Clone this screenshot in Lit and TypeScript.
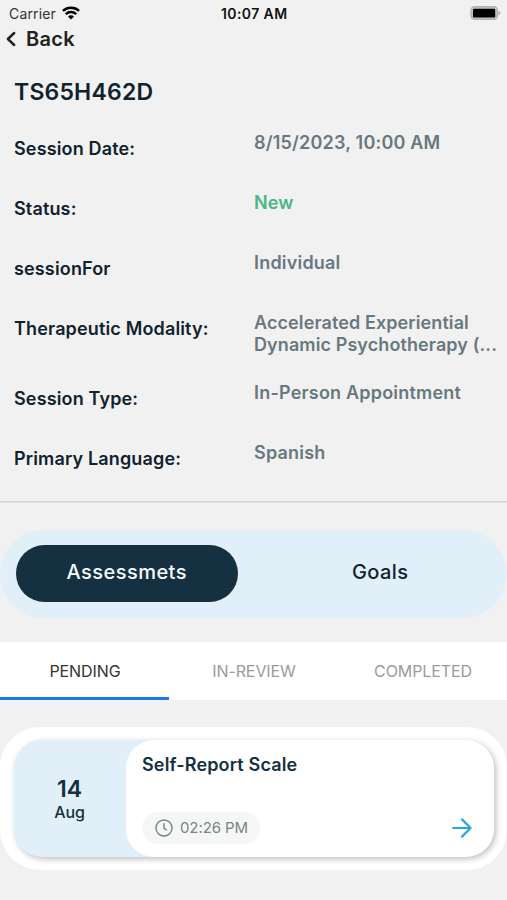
import { LitElement, html, css, svg } from "lit";
import { customElement, state } from "lit/decorators.js";
import { classMap } from "lit/directives/class-map.js";

interface Detail {
  label: string;
  value: string;
  kind?: string;
}

const DETAILS: Detail[] = [
  { label: "Session Date:", value: "8/15/2023, 10:00 AM" },
  { label: "Status:", value: "New", kind: "new" },
  { label: "sessionFor", value: "Individual" },
  { label: "Therapeutic Modality:", value: "Accelerated Experiential Dynamic Psychotherapy (...", kind: "tall" },
  { label: "Session Type:", value: "In-Person Appointment" },
  { label: "Primary Language:", value: "Spanish" },
];

const wifi = svg`<svg class="wifi" width="18" height="14" viewBox="0 0 18 14" fill="none" stroke="#000" stroke-width="2.5">
  <path d="M0.9 4.9C5.4 0.7 12.6 0.7 17.1 4.9"/>
  <path d="M3.8 8.2C6.8 5.4 11.2 5.4 14.2 8.2"/>
  <path d="M9 13.6L5.9 10.5C7.7 8.9 10.3 8.9 12.1 10.5Z" fill="#000" stroke="none"/>
</svg>`;

const battery = svg`<svg class="battery" width="31" height="14" viewBox="0 0 31 14">
  <rect x="1" y="0.8" width="26.4" height="12.6" rx="3.6" fill="#c4c4c4" stroke="#b2b2b2" stroke-width="1.4"/>
  <rect x="3" y="2.8" width="22.2" height="8.8" rx="1.2" fill="#000"/>
  <path d="M28.4 4.8C31 5.6 31 8.6 28.4 9.4Z" fill="#b2b2b2"/>
</svg>`;

@customElement("app-root")
export class AppRoot extends LitElement {
  @state() private section = "Assessmets";
  @state() private tab = "PENDING";

  static styles = css`
    :host {
      display: block;
      height: 900px;
      overflow: hidden;
      background: #f1f1f1;
      color: #10222e;
      font-family: Inter, "Liberation Sans", sans-serif;
      white-space: nowrap;
    }
    * { box-sizing: border-box; }
    svg { display: block; flex: none; }
    .status {
      display: grid;
      grid-template-columns: 1fr auto 1fr;
      align-items: center;
      height: 28px;
      padding: 0 6px 2px 9px;
      font-size: 14px;
      line-height: 18px;
      color: #333;
    }
    .carrier { display: flex; align-items: center; gap: 6px; letter-spacing: 0.15px; }
    .carrier span { padding-top: 1px; }
    .wifi { margin-top: -1px; }
    .clock { font-weight: 600; color: #111; padding: 1px 1.5px 0 0; letter-spacing: 0.4px; }
    .battery { justify-self: end; }
    .back {
      display: flex;
      align-items: center;
      gap: 10px;
      height: 22px;
      padding: 0 0 1px 6px;
      font-size: 20px;
      font-weight: 600;
      letter-spacing: 0.3px;
      color: #222;
    }
    .details {
      height: 451px;
      padding: 28px 8px 0 14px;
    }
    h1 {
      margin: 0;
      height: 54px;
      font-size: 23px;
      line-height: 28px;
      font-weight: 600;
      letter-spacing: 0.2px;
    }
    .row {
      display: flex;
      height: 60px;
      font-size: 18px;
      line-height: 22px;
      font-weight: 600;
      letter-spacing: 0.15px;
    }
    .row.tall { height: 70px; }
    .label { width: 240px; padding-top: 6px; }
    .value { flex: 1; color: #687880; white-space: normal; letter-spacing: 0.2px; }
    .value.tall { letter-spacing: 0.1px; }
    .value.new { color: #4cb782; letter-spacing: 0.1px; }
    .rule { height: 2px; background: #cfcfcf; border-bottom: 1px solid #e3e3e3; }
    .switch {
      display: flex;
      height: 88px;
      margin-top: 26.5px;
      padding: 15px 15.5px;
      border-radius: 44px;
      background: #e1eff8;
    }
    .segment {
      display: flex;
      align-items: center;
      justify-content: center;
      width: 222.5px;
      height: 57px;
      padding-bottom: 3px;
      border-radius: 29px;
      font-size: 20px;
      font-weight: 500;
      letter-spacing: 0.45px;
    }
    .segment + .segment { margin-left: 31px; }
    .segment.on { background: #153040; color: #f4fafd; }
    .tabs { display: flex; height: 58px; margin-top: 24.5px; background: #fff; }
    .tab {
      flex: 1;
      display: flex;
      align-items: center;
      justify-content: center;
      font-size: 16px;
      letter-spacing: -0.1px;
      color: #9b9b9b;
      border-bottom: 3px solid transparent;
      padding: 3px 0 0 1px;
    }
    .tab.on { color: #333; border-bottom-color: #1a78ee; }
    .card-frame {
      height: 143px;
      margin-top: 27px;
      padding: 13px 13px 13.5px 14px;
      border-radius: 40px;
      background: #fff;
    }
    .card {
      display: flex;
      height: 116.5px;
      border-radius: 28px;
      background: #e1eff8;
      box-shadow: 2px 2px 6px rgba(0, 0, 0, 0.26);
    }
    .date {
      width: 112px;
      display: flex;
      flex-direction: column;
      align-items: center;
      padding: 35px 1px 0 0;
      color: #153040;
    }
    .day { font-size: 23px; line-height: 28px; font-weight: 600; }
    .month { font-size: 16px; line-height: 19px; font-weight: 500; letter-spacing: -0.2px; }
    .body {
      flex: 1;
      display: flex;
      flex-direction: column;
      justify-content: space-between;
      padding: 14px 22px 13px 16px;
      border-radius: 28px;
      background: #fff;
    }
    .name { font-size: 18px; line-height: 22px; font-weight: 600; letter-spacing: 0.15px; color: #153040; }
    .foot { display: flex; align-items: center; justify-content: space-between; }
    .time {
      display: flex;
      align-items: center;
      gap: 7px;
      width: 117.5px;
      height: 32px;
      padding-left: 13px;
      border-radius: 16px;
      background: #f5f7f7;
      color: #7d8386;
      font-size: 15px;
      letter-spacing: -0.1px;
    }
  `;

  render() {
    return html`
      <div class="status">
        <div class="carrier"><span>Carrier</span>${wifi}</div>
        <div class="clock">10:07 AM</div>
        ${battery}
      </div>
      <div class="back">
        <svg width="10" height="16" viewBox="0 0 10 16" fill="none" stroke="#222" stroke-width="2.5" stroke-linecap="round" stroke-linejoin="round"><path d="M8.2 2L1.9 8L8.2 14"/></svg>
        <span>Back</span>
      </div>
      <div class="details">
        <h1>TS65H462D</h1>
        ${DETAILS.map(
          (d) => html`<div class="row ${d.kind ?? ""}">
            <div class="label">${d.label}</div>
            <div class="value ${d.kind ?? ""}">${d.value}</div>
          </div>`
        )}
      </div>
      <div class="rule"></div>
      <div class="switch">
        ${["Assessmets", "Goals"].map(
          (s) => html`<div class=${classMap({ segment: true, on: s === this.section })} @click=${() => (this.section = s)}>${s}</div>`
        )}
      </div>
      <div class="tabs">
        ${["PENDING", "IN-REVIEW", "COMPLETED"].map(
          (t) => html`<div class=${classMap({ tab: true, on: t === this.tab })} @click=${() => (this.tab = t)}>${t}</div>`
        )}
      </div>
      <div class="card-frame">
        <div class="card">
          <div class="date"><span class="day">14</span><span class="month">Aug</span></div>
          <div class="body">
            <div class="name">Self-Report Scale</div>
            <div class="foot">
              <div class="time">
                <svg width="18" height="18" viewBox="0 0 18 18" fill="none" stroke="#7d8386" stroke-width="1.4" stroke-linecap="round"><circle cx="9" cy="9" r="8"/><path d="M9 4.6V9.4L11.4 10.8"/></svg>
                <span>02:26 PM</span>
              </div>
              <svg width="20" height="20" viewBox="0 0 20 20" fill="none" stroke="#2ba5da" stroke-width="2.2" stroke-linecap="round" stroke-linejoin="round"><path d="M1.2 10H18.6M10 1.4L18.6 10L10 18.6"/></svg>
            </div>
          </div>
        </div>
      </div>
    `;
  }
}
